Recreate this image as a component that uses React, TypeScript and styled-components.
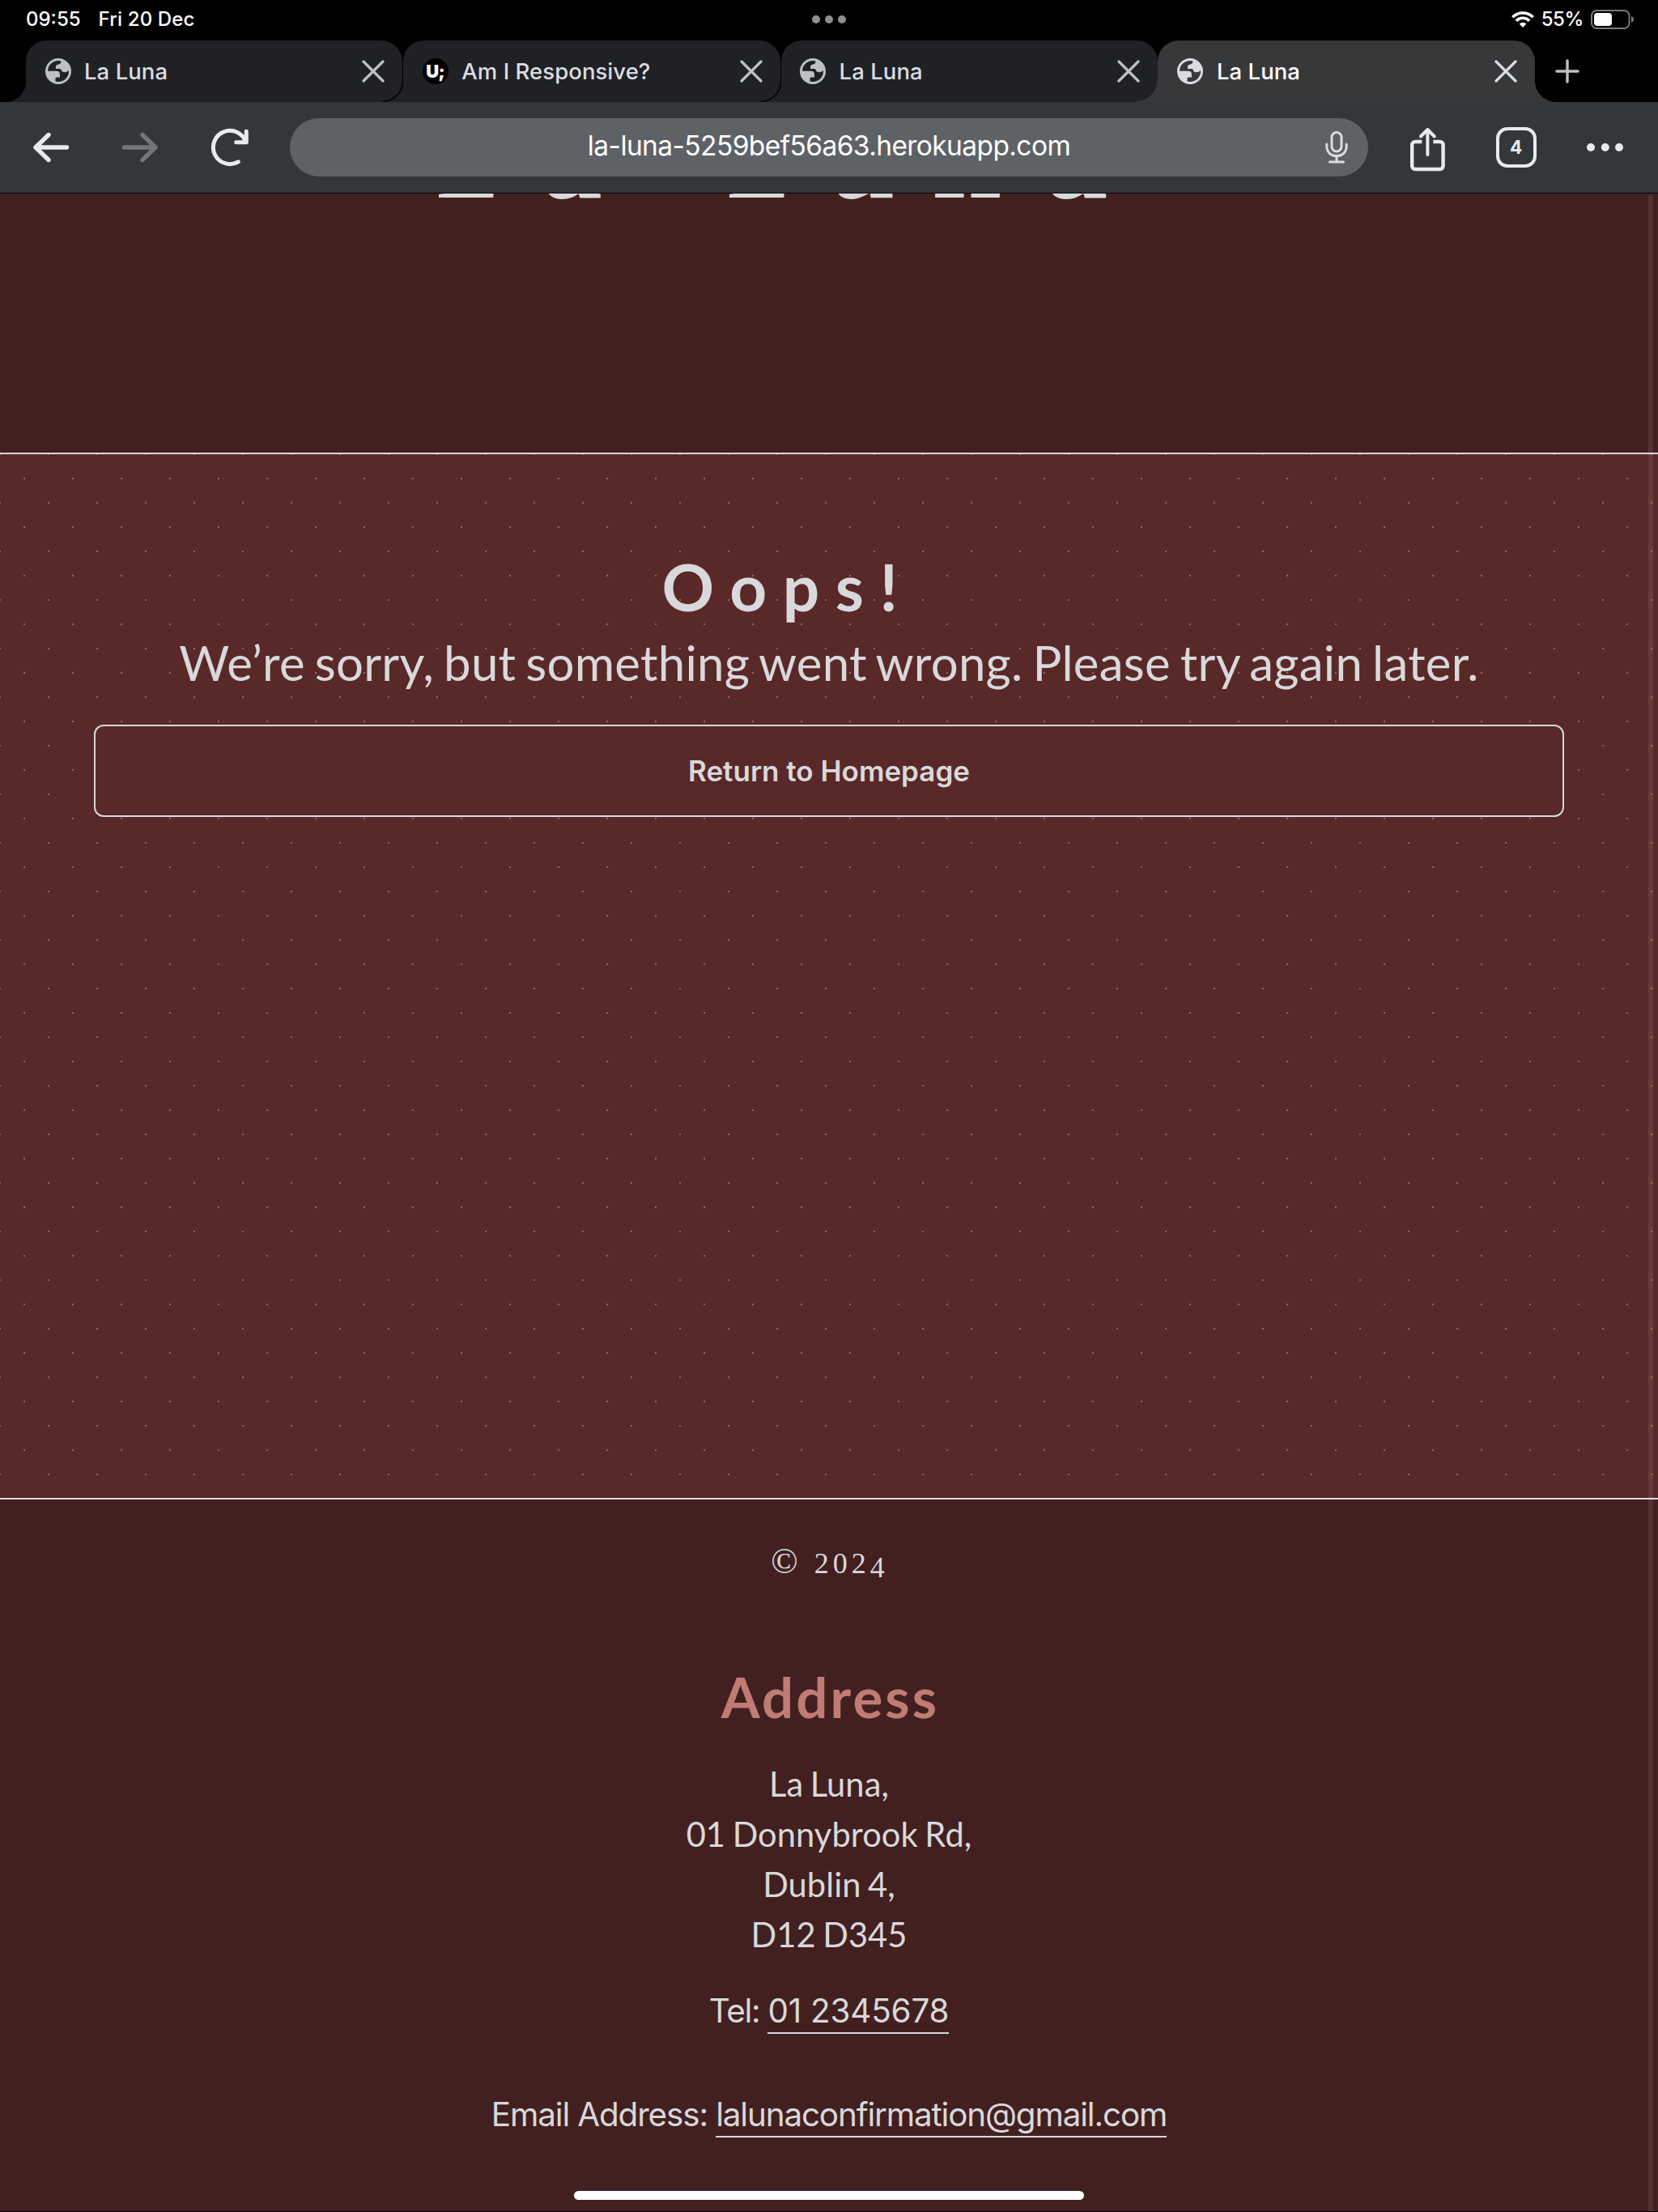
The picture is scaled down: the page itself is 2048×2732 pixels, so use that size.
import React from "react";
import styled, { createGlobalStyle, css } from "styled-components";

const GlobalStyle = createGlobalStyle`
  *, *::before, *::after { box-sizing: border-box; }
  html, body { margin: 0; padding: 0; background: #000; }
  svg { display: block; }
`;

const ui = `Inter, "Liberation Sans", sans-serif`;
const brand = `Lato, "Open Sans", sans-serif`;
const display = `"Liberation Serif", serif`;

const Screen = styled.div`
  position: relative;
  display: flex;
  flex-direction: column;
  width: 2048px;
  height: 2732px;
  overflow: hidden;
  background: #000;
  border-bottom: 1px solid #000;
`;

/* ---------- status bar ---------- */
const StatusBar = styled.div`
  display: grid;
  grid-template-columns: 1fr auto 1fr;
  align-items: center;
  height: 50px;
  padding: 0 29px 2px 32px;
  color: #fff;
  font: 500 24px/30px ${ui};
`;
const StatusLeft = styled.div`
  display: flex;
  gap: 22px;
`;
const StatusText = styled.span<{ $ls?: number }>`
  letter-spacing: ${(p) => p.$ls ?? 0}px;
  white-space: nowrap;
`;
const Multitask = styled.div`
  display: flex;
  gap: 6px;
  margin-right: 3px;
`;
const MultitaskDot = styled.i`
  width: 10px;
  height: 10px;
  border-radius: 50%;
  background: #8e8e90;
`;
const StatusRight = styled.div`
  display: flex;
  justify-content: flex-end;
  align-items: center;
  gap: 9px;
`;

/* ---------- tab strip ---------- */
const TabStrip = styled.div`
  display: flex;
  height: 76px;
  padding-left: 31px;
`;
const Tab = styled.div<{ $active?: boolean }>`
  position: relative;
  display: flex;
  align-items: center;
  width: 466.3px;
  height: 76px;
  padding: 0 22px 0 ${(p) => (p.$active ? 24.5 : 23.5)}px;
  border-radius: 26px 26px 0 0;
  border-left: ${(p) => (p.$active ? 0 : 1.5)}px solid #000;
  background: ${(p) => (p.$active ? "#373839" : "#202125")};
  color: ${(p) => (p.$active ? "#fff" : "#dadce0")};

  &::before,
  &::after {
    content: "";
    position: absolute;
    bottom: 0;
    width: 26px;
    height: 26px;
  }
  &::before {
    left: -26px;
    background: radial-gradient(
      circle at 0 0,
      transparent 24.5px,
      ${(p) => (p.$active ? "#373839 25.3px" : "#000 25px, #000 26px, #202125 26.6px")}
    );
  }
  ${(p) =>
    p.$active &&
    css`
      &::after {
        right: -26px;
        background: radial-gradient(circle at 100% 0, transparent 25.5px, #373839 26.3px);
      }
    `}
`;
const TabTitle = styled.span`
  flex: 1;
  margin-left: 16.5px;
  font: 500 27.5px/36px ${ui};
  letter-spacing: 0.05px;
  white-space: nowrap;
`;
const Favicon = styled.span`
  display: flex;
  justify-content: center;
  width: 32px;
  height: 32px;
  border-radius: 50%;
  background: #000;
  color: #fff;
  font: 900 22px/32px ${ui};
  letter-spacing: -0.5px;
`;
const NewTab = styled.div`
  display: flex;
  align-items: center;
  margin-left: 24.5px;
`;

/* ---------- toolbar ---------- */
const Toolbar = styled.div`
  display: flex;
  align-items: center;
  height: 113px;
  padding: 0 43px 0 36px;
  border-bottom: 1px solid #0a0606;
  background: #33373a;
`;
const NavGroup = styled.div`
  display: flex;
  align-items: center;
  gap: 56px;
  width: 322px;
  flex: none;
`;
const Omnibox = styled.div`
  display: grid;
  grid-template-columns: 70px 1fr 70px;
  align-items: center;
  width: 1332px;
  height: 72px;
  flex: none;
  border-radius: 36px;
  background: #5e6266;
`;
const Url = styled.span`
  grid-column: 2;
  margin-bottom: 4px;
  text-align: center;
  color: #fff;
  font: 400 33.5px/44px ${ui};
  letter-spacing: -0.6px;
`;
const MicSlot = styled.span`
  justify-self: end;
  margin-right: 25px;
`;
const ActionGroup = styled.div`
  display: flex;
  align-items: center;
  justify-content: space-between;
  flex: 1;
  margin-left: 52px;
`;
const ShareSlot = styled.span`
  margin-top: 3px;
`;
const TabCount = styled.span`
  display: flex;
  justify-content: center;
  align-items: center;
  width: 50px;
  height: 50px;
  border: 4.5px solid #e8eaed;
  border-radius: 14px;
  color: #e8eaed;
  font: 700 22.5px/30px ${ui};
`;

/* ---------- web page ---------- */
const Page = styled.div`
  position: relative;
  display: flex;
  flex-direction: column;
  flex: 1;
  background: #422020;
  color: #d9d8da;
  font-family: ${brand};
`;
const ScrollThumb = styled.div`
  position: absolute;
  top: 1px;
  right: 6px;
  bottom: 0;
  width: 6px;
  border-radius: 3px 3px 0 0;
  background: rgba(200, 210, 220, 0.11);
`;
const Header = styled.header`
  height: 320px;
  overflow: hidden;
`;
const Logo = styled.h1`
  display: flex;
  align-items: baseline;
  margin: -122px 0 0;
  padding-left: 540px;
  font: 700 155px/150px ${display};
`;
const LogoLetter = styled.span<{ $w: number; $size?: number }>`
  flex: none;
  width: ${(p) => p.$w}px;
  font-size: ${(p) => p.$size ?? 155}px;
`;
const Main = styled.main`
  display: flex;
  flex-direction: column;
  align-items: center;
  height: 1293px;
  padding: 115px 116px 0;
  border-top: 2px solid #d9d8da;
  border-bottom: 2px solid #dadce4;
  background-color: #592829;
  background-image: radial-gradient(circle at 30px 30px, #a0615f 1px, transparent 1px),
    radial-gradient(circle at 30px 30px, #a0615f 1px, transparent 1px);
  background-size: 60px 60px;
  background-position: 0 0, 30px 30px;
`;
const Oops = styled.h2`
  margin: 0;
  padding-right: 102px;
  font: 700 80px/96px ${brand};
  letter-spacing: 19.6px;
`;
const Message = styled.p`
  margin: 1px 0 0;
  font: 400 60px/90px ${brand};
  letter-spacing: 0.22px;
  word-spacing: -3.6px;
  white-space: nowrap;
`;
const HomeButton = styled.button`
  width: 100%;
  height: 114px;
  margin-top: 32px;
  border: 2px solid #d9d8da;
  border-radius: 12px;
  background: #592829;
  color: #d9d8da;
  font: 600 35px/44px ${ui};
`;
const Footer = styled.footer`
  display: flex;
  flex-direction: column;
  align-items: center;
  padding-top: 53px;
  text-align: center;
`;
const Copyright = styled.p`
  display: flex;
  align-items: baseline;
  height: 54px;
  margin: -3px 3px 3px 0;
  font: 400 36px/54px ${display};
  letter-spacing: 5px;
`;
const CopyrightSign = styled.span`
  margin-right: 20px;
  font-size: 44px;
  letter-spacing: 0;
`;
const LowDigit = styled.span`
  vertical-align: -5px;
  line-height: 0;
  letter-spacing: 0;
`;
const FooterTitle = styled.h3`
  margin: 95px 0 0;
  padding-left: 3px;
  color: #c07b75;
  font: 700 69px/84px ${brand};
  letter-spacing: 3.1px;
`;
const Address = styled.address`
  margin-top: 34px;
  font: 400 41.6px/62px ${brand};
  letter-spacing: 0.1px;
  word-spacing: -2.2px;
`;
const Contact = styled.p<{ $gap: number; $ls: number }>`
  margin: ${(p) => p.$gap}px 0 0;
  font: 400 40.4px/62px ${ui};
  letter-spacing: ${(p) => p.$ls}px;
`;
const ContactLink = styled.a<{ $ls: number }>`
  display: inline-block;
  line-height: 53px;
  border-bottom: 2px solid #d9d8da;
  color: inherit;
  letter-spacing: ${(p) => p.$ls}px;
  text-decoration: none;
`;
const HomeIndicator = styled.div`
  position: absolute;
  left: 709px;
  bottom: 14px;
  width: 630px;
  height: 11px;
  border-radius: 5.5px;
  background: #fff;
`;

/* ---------- icons ---------- */
const Globe = ({ color }: { color: string }) => (
  <svg width="32" height="32" viewBox="0 0 32 32">
    <circle cx="16" cy="16" r="14.5" fill="none" stroke={color} strokeWidth="3" />
    <path
      fill={color}
      d="M19 2.5C20.5 5 18 7.5 15.5 7.8 13.5 8.2 13 9 13 11v2h4.5c2.5 0 2 2 3.5 3.5 2 1.2 5 1 7.500-1L30 13C29 7 25 3 19 2.5zM2 15.7h12c2.5 0 4 1.5 4 4.3v3.500h-3.500c-1.500 0-2 .8-2 2V30C6 28.500 2 23 2 15.700z"
    />
  </svg>
);
const Cross = ({ color }: { color: string }) => (
  <svg width="28" height="28" viewBox="0 0 28 28">
    <path d="M2 2l24 24M26 2L2 26" stroke={color} strokeWidth="3.2" strokeLinecap="round" />
  </svg>
);
const Plus = () => (
  <svg width="30" height="30" viewBox="0 0 30 30">
    <path d="M15 2v26M2 15h26" stroke="#bdc1c6" strokeWidth="3.4" strokeLinecap="round" />
  </svg>
);
const Arrow = ({ color, flip }: { color: string; flip?: boolean }) => (
  <svg width="54" height="54" viewBox="0 0 54 54">
    <g transform={flip ? "translate(54 0) scale(-1 1)" : undefined}>
      <path
        d="M24 11.5L8 27l16 15.5M8 27h38.5"
        fill="none"
        stroke={color}
        strokeWidth="5.4"
        strokeLinecap="round"
        strokeLinejoin="round"
      />
    </g>
  </svg>
);
const Reload = () => (
  <svg width="54" height="54" viewBox="0 0 54 54">
    <path
      d="M38.3 44.8A20.6 20.6 0 1 1 47.6 20.7M48.3 7.3v13.4H35.7"
      fill="none"
      stroke="#e8eaed"
      strokeWidth="5"
      strokeLinecap="round"
      strokeLinejoin="round"
    />
  </svg>
);
const Mic = () => (
  <svg width="28" height="40" viewBox="0 0 28 40">
    <g fill="none" stroke="#dadce0" strokeWidth="3" strokeLinecap="round">
      <rect x="8" y="1.5" width="12" height="23.5" rx="6" />
      <path d="M1.8 16v2.5c0 7.5 5 12 12.2 12s12.2-4.5 12.2-12V16M14 31v6.5M5.5 38h17" />
    </g>
  </svg>
);
const Share = () => (
  <svg width="43" height="56" viewBox="0 0 43 56">
    <g fill="none" stroke="#e8eaed" strokeWidth="4.4" strokeLinejoin="round">
      <path d="M14.3 19H6.2a4 4 0 0 0-4 4v26a4 4 0 0 0 4 4h30.4a4 4 0 0 0 4-4V23a4 4 0 0 0-4-4h-8.2" />
      <path d="M21.4 35V4M13 12.5L21.4 4l8.4 8.5" strokeLinecap="round" strokeWidth="4" />
    </g>
  </svg>
);
const More = () => (
  <svg width="45" height="10" viewBox="0 0 45 10">
    <g fill="#e8eaed">
      <circle cx="5" cy="5" r="5" />
      <circle cx="22.8" cy="5" r="5" />
      <circle cx="40" cy="5" r="5" />
    </g>
  </svg>
);
const Wifi = () => (
  <svg width="28" height="20" viewBox="0 0 28 20">
    <g fill="none" stroke="#fff" strokeWidth="3.6">
      <path d="M1.3 7.2a18 18 0 0 1 25.4 0" />
      <path d="M5.8 11.7a11.6 11.6 0 0 1 16.4 0" />
    </g>
    <path d="M14 20l-4.3-4.4a6.1 6.1 0 0 1 8.6 0z" fill="#fff" />
  </svg>
);
const Battery = () => (
  <svg width="54" height="24" viewBox="0 0 54 24">
    <rect x="1" y="1" width="46.5" height="22" rx="6.5" fill="none" stroke="#7b7b7d" strokeWidth="2" />
    <rect x="4" y="4" width="22" height="16" rx="4" fill="#fff" />
    <path d="M50 8c2 .8 3 2.2 3 4s-1 3.2-3 4z" fill="#7b7b7d" />
  </svg>
);

const tabs = [
  { title: "La Luna" },
  { title: "Am I Responsive?", badge: "U;" },
  { title: "La Luna" },
  { title: "La Luna", active: true },
];

export default function App() {
  return (
    <>
      <GlobalStyle />
      <Screen>
        <StatusBar>
          <StatusLeft>
            <StatusText>09:55</StatusText>
            <StatusText $ls={0.15}>Fri 20 Dec</StatusText>
          </StatusLeft>
          <Multitask>
            <MultitaskDot />
            <MultitaskDot />
            <MultitaskDot />
          </Multitask>
          <StatusRight>
            <Wifi />
            <StatusText $ls={-0.4}>55%</StatusText>
            <Battery />
          </StatusRight>
        </StatusBar>

        <TabStrip>
          {tabs.map((t, i) => (
            <Tab key={i} $active={t.active}>
              {t.badge ? <Favicon>{t.badge}</Favicon> : <Globe color={t.active ? "#dadce0" : "#bdc1c6"} />}
              <TabTitle>{t.title}</TabTitle>
              <Cross color={t.active ? "#dadce0" : "#bdc1c6"} />
            </Tab>
          ))}
          <NewTab>
            <Plus />
          </NewTab>
        </TabStrip>

        <Toolbar>
          <NavGroup>
            <Arrow color="#e8eaed" />
            <Arrow color="#757678" flip />
            <Reload />
          </NavGroup>
          <Omnibox>
            <Url>la-luna-5259bef56a63.herokuapp.com</Url>
            <MicSlot>
              <Mic />
            </MicSlot>
          </Omnibox>
          <ActionGroup>
            <ShareSlot>
              <Share />
            </ShareSlot>
            <TabCount>4</TabCount>
            <More />
          </ActionGroup>
        </Toolbar>

        <Page>
          <Header>
            <Logo>
              <LogoLetter $w={129} $size={114}>L</LogoLetter>
              <LogoLetter $w={230} $size={150}>a</LogoLetter>
              <LogoLetter $w={124} $size={114}>L</LogoLetter>
              <LogoLetter $w={128} $size={150}>u</LogoLetter>
              <LogoLetter $w={140}>n</LogoLetter>
              <LogoLetter $w={80}>a</LogoLetter>
            </Logo>
          </Header>
          <Main>
            <Oops>Oops!</Oops>
            <Message>We’re sorry, but something went wrong. Please try again later.</Message>
            <HomeButton>Return to Homepage</HomeButton>
          </Main>
          <Footer>
            <Copyright>
              <CopyrightSign>©</CopyrightSign>
              <span>
                202<LowDigit>4</LowDigit>
              </span>
            </Copyright>
            <FooterTitle>Address</FooterTitle>
            <Address>
              La Luna,
              <br />
              01 Donnybrook Rd,
              <br />
              Dublin 4,
              <br />
              D12 D345
            </Address>
            <Contact $gap={33} $ls={-1.3}>
              Tel: <ContactLink $ls={-0.2}>01 2345678</ContactLink>
            </Contact>
            <Contact $gap={66} $ls={-1.13}>
              Email Address: <ContactLink $ls={-1.15}>lalunaconfirmation@gmail.com</ContactLink>
            </Contact>
          </Footer>
          <ScrollThumb />
        </Page>
        <HomeIndicator />
      </Screen>
    </>
  );
}
